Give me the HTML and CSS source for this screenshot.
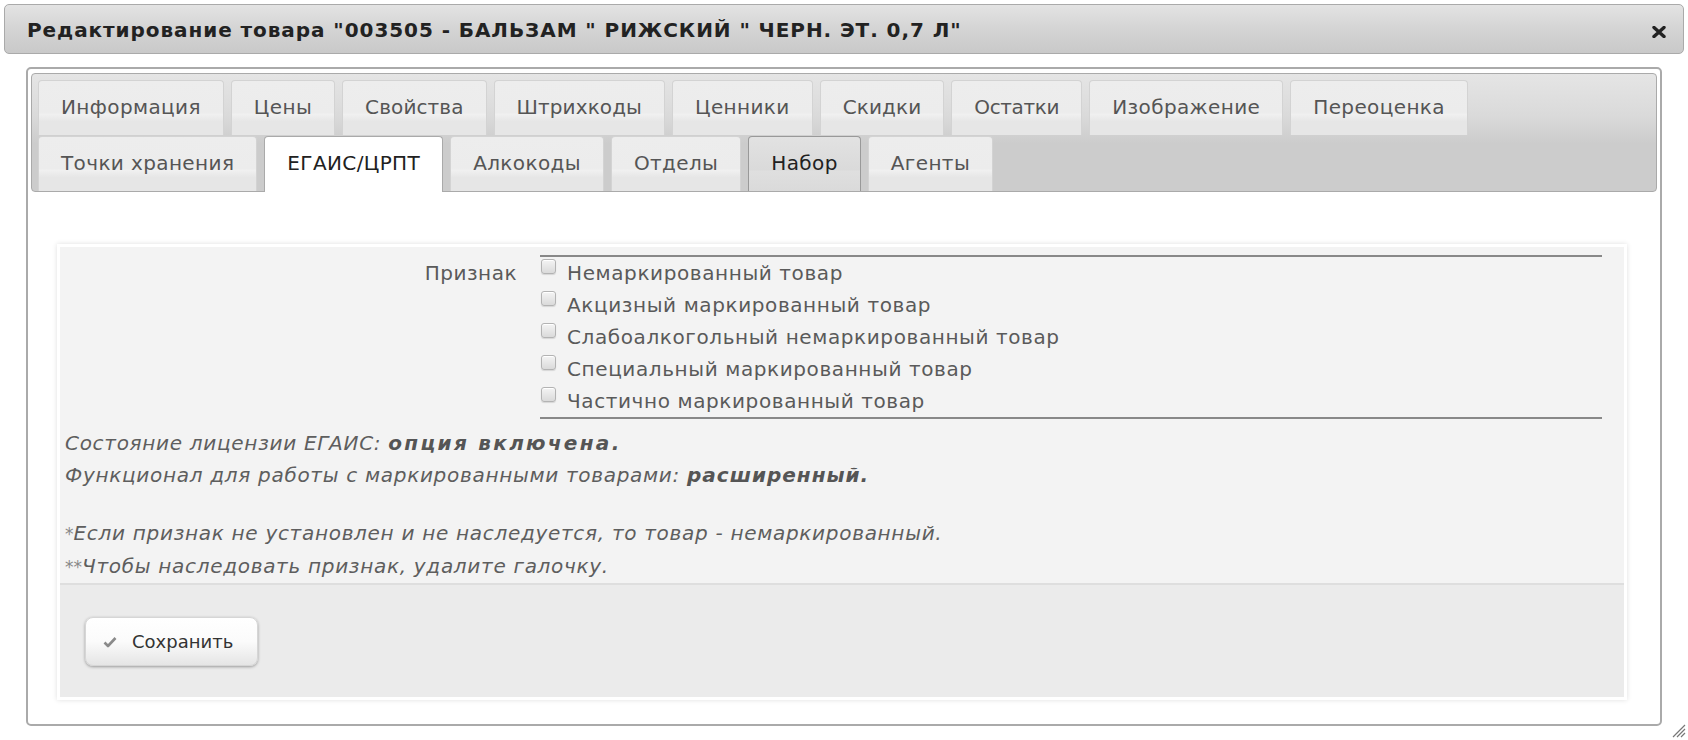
FILE: index.html
```html
<!DOCTYPE html>
<html lang="ru">
<head>
<meta charset="utf-8">
<title>Редактирование товара</title>
<link rel="stylesheet" href="styles.css">
</head>
<body>
<div class="dialog">
  <div class="titlebar">
    <span class="title">Редактирование товара "003505 - БАЛЬЗАМ " РИЖСКИЙ " ЧЕРН. ЭТ. 0,7 Л"</span>
    <span class="close" title="Закрыть"><svg width="14" height="12" viewBox="0 0 14 12"><path d="M2 1.5 L12 10.5 M12 1.5 L2 10.5" stroke="#222" stroke-width="3.4" stroke-linecap="round"/></svg></span>
  </div>
  <div class="content">
    <div class="tabs">
      <ul class="nav">
        <li class="tab">Информация</li>
        <li class="tab">Цены</li>
        <li class="tab tight">Свойства</li>
        <li class="tab tight">Штрихкоды</li>
        <li class="tab">Ценники</li>
        <li class="tab tight">Скидки</li>
        <li class="tab tighter">Остатки</li>
        <li class="tab">Изображение</li>
        <li class="tab">Переоценка</li>
        <li class="tab">Точки хранения</li>
        <li class="tab active">ЕГАИС/ЦРПТ</li>
        <li class="tab">Алкокоды</li>
        <li class="tab">Отделы</li>
        <li class="tab hover">Набор</li>
        <li class="tab">Агенты</li>
      </ul>
    </div>
    <div class="form">
      <div class="fields">
        <div class="field">
          <div class="label">Признак</div>
          <div class="options">
            <label class="opt"><span class="cb"></span>Немаркированный товар</label>
            <label class="opt"><span class="cb"></span>Акцизный маркированный товар</label>
            <label class="opt"><span class="cb"></span>Слабоалкогольный немаркированный товар</label>
            <label class="opt"><span class="cb"></span>Специальный маркированный товар</label>
            <label class="opt"><span class="cb"></span>Частично маркированный товар</label>
          </div>
        </div>
        <div class="notes">
          <p class="note">Состояние лицензии ЕГАИС: <b class="wide">опция включена.</b></p>
          <p class="note">Функционал для работы с маркированными товарами: <b>расширенный.</b></p>
          <p class="note gap"><span class="star">*</span>Если признак не установлен и не наследуется, то товар - немаркированный.</p>
          <p class="note"><span class="star">**</span>Чтобы наследовать признак, удалите галочку.</p>
        </div>
      </div>
      <div class="footer">
        <button class="btn" type="button"><svg class="check" width="14" height="12" viewBox="0 0 14 12"><path d="M1.5 6.5 L5 10 L12.5 2" fill="none" stroke="#8a8a8a" stroke-width="2.6" stroke-linejoin="round"/></svg>Сохранить</button>
      </div>
    </div>
  </div>
  <div class="resize"><svg width="16" height="16" viewBox="0 0 16 16"><path d="M15 3 L3 15 M15 7 L7 15 M15 11 L11 15" stroke="#777" stroke-width="1.2"/></svg></div>
</div>
</body>
</html>
```

FILE: styles.css
```css
* { box-sizing: border-box; }
html, body { margin: 0; background: #fff; }
body {
  font-family: "DejaVu Sans", Verdana, sans-serif;
  color: #222;
}
.dialog {
  position: relative;
  width: 1688px;
  height: 740px;
  padding: 4px 4px 0 4px;
}
.titlebar {
  height: 50px;
  border: 1px solid #aaa;
  border-radius: 5px;
  background: linear-gradient(#e3e3e3, #d4d4d4 50%, #c9c9c9);
  display: flex;
  align-items: center;
  justify-content: space-between;
  padding: 2px 17px 0 22px;
}
.title {
  font-weight: bold;
  font-size: 20px;
  letter-spacing: 0.93px;
  color: #222;
}
.close { display: flex; margin-top: 3px; }
.content {
  margin: 13px 22px 0 22px;
  height: 659px;
  border: 2px solid #aaa;
  border-radius: 5px;
  padding: 4px 3px;
}
.tabs {
  border: 1px solid #aaa;
  border-radius: 4px;
  background: linear-gradient(#e5e5e5, #dadada 35%, #cccccc 60%, #cccccc);
}
.nav {
  list-style: none;
  margin: 0;
  padding: 5px 5px 0 6px;
  display: flex;
  flex-wrap: wrap;
  align-items: flex-start;
}
.tab {
  margin: 1px 7px 0 0;
  height: 55px;
  line-height: 53px;
  padding: 0 22px;
  font-size: 20px;
  letter-spacing: 0.38px;
  color: #555;
  border: 1px solid #d3d3d3;
  border-bottom: 0;
  border-radius: 4px 4px 0 0;
  background: linear-gradient(#ededed, #ececec 58%, #f0f0f0 62%, #e6e6e6 75%, #e6e6e6);
  white-space: nowrap;
}
.tab.tight { letter-spacing: 0.1px; }
.tab.tighter { letter-spacing: -0.35px; }
.tab.active {
  background: #fff;
  border-color: #aaa;
  color: #212121;
  height: 56px;
  margin-bottom: -1px;
}
.tab.hover {
  background: linear-gradient(#e2e2e2, #dadada 60%, #dfdfdf 64%, #dadada);
  border-color: #999;
  color: #212121;
}
.form {
  margin: 52px 30px 0 26px;
  border: 3px solid #fff;
  box-shadow: 0 0 5px rgba(0, 0, 0, 0.13);
  background: #f3f3f3;
}
.fields {
  padding: 8px 0 0 5px;
}
.field {
  display: grid;
  grid-template-columns: 452px 1fr;
  column-gap: 23px;
}
.label {
  text-align: right;
  font-size: 20px;
  letter-spacing: 0.5px;
  line-height: 32px;
  color: #5a5a5a;
  padding-top: 2px;
}
.options {
  margin-right: 22px;
  border-top: 2px solid #888;
  border-bottom: 2px solid #888;
}
.opt {
  display: flex;
  align-items: flex-start;
  font-size: 20px;
  letter-spacing: 0.6px;
  line-height: 32px;
  color: #5a5a5a;
  height: 32px;
}
.cb {
  width: 15px;
  height: 15px;
  margin: 2px 11px 0 1px;
  border: 1px solid #b3b3b3;
  border-radius: 3px;
  background: linear-gradient(#f4f4f4, #dadada);
  box-shadow: inset 0 1px 0 #fff, 0 1px 1px rgba(0,0,0,0.12);
  flex: none;
}
.notes { padding-top: 8px; }
.note {
  margin: 0;
  font-size: 20px;
  letter-spacing: 0.7px;
  line-height: 32px;
  font-style: italic;
  color: #5e5e5e;
}
.note b { font-weight: bold; letter-spacing: 1.0px; color: #555; }
.note b.wide { letter-spacing: 2.3px; }
.note.gap { margin-top: 26px; }
.star { font-style: normal; font-size: 17px; color: #888; letter-spacing: 0; }
.footer {
  margin-top: 0;
  border-top: 2px solid #dedede;
  background: #ebebeb;
  height: 114px;
  padding: 32px 0 0 25px;
}
.btn {
  display: flex;
  align-items: center;
  width: 173px;
  height: 49px;
  padding: 0 0 0 17px;
  border: 1px solid #d6d6d6;
  border-radius: 8px;
  background: linear-gradient(#ffffff, #fbfbfb 50%, #e5e5e5);
  box-shadow: 0 1px 3px rgba(0, 0, 0, 0.35);
  font-family: "DejaVu Sans", Verdana, sans-serif;
  font-size: 18px;
  color: #333;
}
.check { margin-right: 15px; }
.resize {
  position: absolute;
  right: 2px;
  bottom: 2px;
  width: 16px;
  height: 16px;
}
```
